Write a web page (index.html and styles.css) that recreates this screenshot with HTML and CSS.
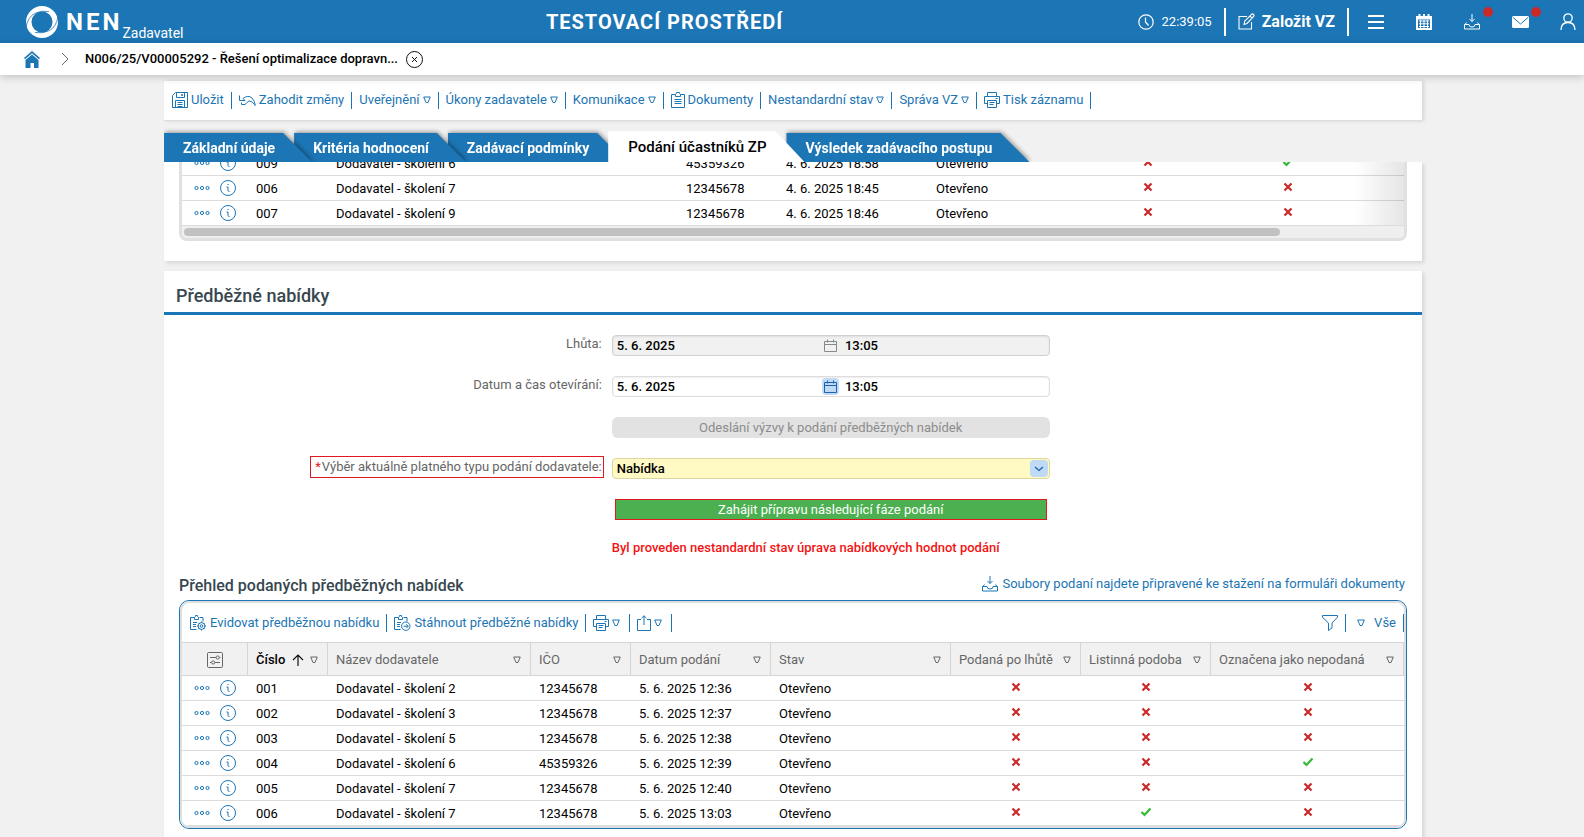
FILE: index.html
```html
<!DOCTYPE html>
<html lang="cs">
<head>
<meta charset="utf-8">
<title>NEN – Podání účastníků ZP</title>
<link rel="stylesheet" href="styles.css">
</head>
<body>
<svg class="sprite" aria-hidden="true">
  <symbol id="tri" viewBox="0 0 8 8"><path d="M.7 1h6.6L5 6.500H3z" fill="none" stroke="currentColor"/></symbol>
  <symbol id="x" viewBox="0 0 10 10"><path d="M1.500 1.500l7 7M8.500 1.500l-7 7" stroke="currentColor" stroke-width="2.200" fill="none"/></symbol>
  <symbol id="check" viewBox="0 0 12 10"><path d="M1.500 5l3 3 6-6.500" stroke="currentColor" stroke-width="2.200" fill="none"/></symbol>
  <symbol id="dots" viewBox="0 0 16 6"><g fill="none" stroke="currentColor"><circle cx="2.500" cy="3" r="1.600"/><circle cx="8" cy="3" r="1.600"/><circle cx="13.500" cy="3" r="1.600"/></g></symbol>
  <symbol id="info" viewBox="0 0 16 16"><g fill="none" stroke="currentColor"><circle cx="8" cy="8" r="7.500"/><path d="M6.500 7h1.500v3.500q0 1 1.500 1M7.500 4.500h1.200"/></g></symbol>
  <symbol id="save" viewBox="0 0 16 16"><g fill="none" stroke="currentColor"><path d="M3.500.5h12v15H.5v-12zM4.500.500v5h8v-5M9.500 2.500h1v1h-1zM3.500 15.500v-7h9v7M5.500 10.500h5M5.500 12.500h5M5.500 14.500h5"/></g></symbol>
  <symbol id="undo" viewBox="0 0 17 12"><path d="M.5 1.500v5H6L4 4.500Q9 .5 13 4q3 3 3.300 7.500-2.800-4.500-6.300-4.700L6 10.500H2.500V8.500" fill="none" stroke="currentColor"/></symbol>
  <symbol id="clip" viewBox="0 0 14 16"><g fill="none" stroke="currentColor"><path d="M4.500 2.500h-4v13h13v-13h-4M4.500 4.500v-2q1-.5 1-2h3q0 1.500 1 2v2zM3.500 7.500h7M3.500 9.500h7M3.500 11.500h7"/></g></symbol>
  <symbol id="print" viewBox="0 0 16 16"><g fill="none" stroke="currentColor"><path d="M3.500 4.500v-4h9v4M3.500 11.500h-3v-7h15v7h-3M3.500 8.500h9v7h-9zM5.500 10.500h5M5.500 12.500h4M11.500 6.500h2"/></g></symbol>
  <symbol id="clip-gear" viewBox="0 0 17 16"><g fill="none" stroke="currentColor"><path d="M4.500 2.500h-4v12h6M9.500 2.500h3.500v4M4.500 4.500v-2q1-.5 1-2h2q0 1.500 1 2v2zM3 7.500h4M3 9.500h3M3 11.500h3"/><circle cx="11.500" cy="11" r="3.400"/><circle cx="11.500" cy="11" r="1.300"/><path d="M11.500 6.500v1.500M11.500 14v1.500M7 11h1.500M14.500 11H16M8.400 7.900l1 1M14.600 14.100l-1-1M8.400 14.100l1-1M14.600 7.900l-1 1"/></g></symbol>
  <symbol id="clip-arrow" viewBox="0 0 17 16"><g fill="none" stroke="currentColor"><path d="M4.500 2.500h-4v12h6M9.500 2.500h3.500v4M4.500 4.500v-2q1-.5 1-2h2q0 1.500 1 2v2zM3 7.500h4M3 9.500h3M3 11.500h3"/><circle cx="11.800" cy="11.200" r="4.200"/><path d="M9.500 11.200h4.500M12.300 9.200l2 2-2 2"/></g></symbol>
  <symbol id="share" viewBox="0 0 14 16"><path d="M4 4.500H.5v11h13v-11H10M7 10V.8M4.500 3.200L7 .8l2.500 2.400" fill="none" stroke="currentColor"/></symbol>
  <symbol id="funnel" viewBox="0 0 16 16"><path d="M.5.500h15v1.800l-5.500 5.700v5L6.500 15.500V8L.5 2.300z" fill="none" stroke="currentColor"/></symbol>
  <symbol id="inbox" viewBox="0 0 16 16"><path d="M8 0v7.500M5.500 5L8 7.500 10.500 5M2.500 8.500L.5 11v4h15v-4l-2-2.500M.5 10.500H5q0 2.500 3 2.500t3-2.500h4.500" fill="none" stroke="currentColor"/></symbol>
  <symbol id="sliders" viewBox="0 0 16 16"><g fill="none" stroke="currentColor"><rect x=".5" y=".5" width="15" height="15" rx="1"/><path d="M3 5.500h6M12.500 5.500h1M3 10.500h1.500M8 10.500h5"/><circle cx="10.700" cy="5.500" r="1.600"/><circle cx="6.200" cy="10.500" r="1.600"/></g></symbol>
  <symbol id="cal" viewBox="0 0 13 13"><path d="M.5 2.500h12v10H.5zM.5 5.500h12M3.500.500v3M9.500.500v3" fill="none" stroke="currentColor"/></symbol>
</svg>

<header class="topbar">
  <a class="brand" href="#">
    <svg width="34" height="34" viewBox="0 0 34 34"><path fill="#fff" fill-rule="evenodd" d="M17 1a16 16 0 1 1 0 32a16 16 0 1 1 0-32zM17 6.500a10.500 10.500 0 1 0 0 21a10.500 10.500 0 1 0 0-21z"/><path d="M1 22Q3 12 9.500 8.500T24 6.500M33 12Q31 22 24.500 25.500T10 27.500" fill="none" stroke="#1c75b4" stroke-width=".8"/></svg>
    <span class="brand-name">NEN</span><span class="brand-role">Zadavatel</span>
  </a>
  <strong class="env">TESTOVACÍ PROSTŘEDÍ</strong>
  <nav class="tools">
    <span class="clock"><svg width="16" height="16" viewBox="0 0 16 16"><g fill="none" stroke="#fff" stroke-width="1.200"><circle cx="8" cy="8" r="7.200"/><path d="M7.500 3.500V8l3 3.500"/></g></svg>22:39:05</span>
    <a class="create" href="#"><svg width="17" height="17" viewBox="0 0 17 17"><path d="M9 3.500H1v12.500h12.500V9M6 11.500l.8-3.500L13.500 1.300q1-.8 2 .2t.2 2L9 10.500zM12 3l2.200 2.200" fill="none" stroke="#fff" stroke-width="1.100"/></svg>Založit VZ</a>
    <button class="tool" aria-label="Menu"><svg width="16" height="14" viewBox="0 0 16 14"><path d="M0 1h16M0 7h16M0 13h16" stroke="#fff" stroke-width="2"/></svg></button>
    <button class="tool" aria-label="Kalendář"><svg width="16" height="16" viewBox="0 0 16 16"><path fill="#fff" d="M0 2h2.500V0h2v2h2.500V0h2v2h2.500V0h2v2H16v14H0z"/><path d="M2 5.500h12v8.500H2z" fill="#1c75b4"/><path d="M3 7h10M3 9.800h10M3 12.500h10M4.500 6v8M8 6v8M11.500 6v8" stroke="#fff"/></svg></button>
    <button class="tool" aria-label="Stažené soubory"><svg width="16" height="16"><use href="#inbox"/></svg><i class="badge"></i></button>
    <button class="tool" aria-label="Zprávy"><svg width="17" height="12" viewBox="0 0 17 12"><rect width="17" height="12" rx="1.500" fill="#fff"/><path d="M1 1.500l7.500 6.500L16 1.500" fill="none" stroke="#1c75b4"/></svg><i class="badge"></i></button>
    <button class="tool" aria-label="Uživatel"><svg width="16" height="17" viewBox="0 0 16 17"><g fill="none" stroke="#fff" stroke-width="1.300"><circle cx="8" cy="5" r="4.200"/><path d="M1 17q0-7.500 7-7.500t7 7.500"/></g></svg></button>
  </nav>
</header>

<nav class="crumbs">
  <a href="#" aria-label="Domů"><svg width="16" height="17" viewBox="0 0 16 17"><path d="M0 7L8 0l8 7-1 1.200L8 2.300 1 8.200z" fill="#1c75b4"/><path d="M1.500 9L8 3.600 14.500 9v8H10v-5H6.500v5h-5z" fill="#1c75b4"/></svg></a>
  <svg class="chev" width="8" height="14" viewBox="0 0 8 14"><path d="M1 1l6 6-6 6" fill="none" stroke="#666"/></svg>
  <a class="crumb" href="#">N006/25/V00005292 - Řešení optimalizace dopravn...</a>
  <button class="close" aria-label="Zavřít"><svg width="17" height="17" viewBox="0 0 17 17"><g fill="none" stroke="#111"><circle cx="8.500" cy="8.500" r="8"/><path d="M6 6l5 5M11 6l-5 5"/></g></svg></button>
</nav>

<main class="page">
  <div class="actions">
    <button class="act"><svg width="16" height="16"><use href="#save"/></svg>Uložit</button>
    <button class="act"><svg width="17" height="12"><use href="#undo"/></svg>Zahodit změny</button>
    <button class="act">Uveřejnění<svg width="8" height="8"><use href="#tri"/></svg></button>
    <button class="act">Úkony zadavatele<svg width="8" height="8"><use href="#tri"/></svg></button>
    <button class="act">Komunikace<svg width="8" height="8"><use href="#tri"/></svg></button>
    <button class="act"><svg width="14" height="16"><use href="#clip"/></svg>Dokumenty</button>
    <button class="act">Nestandardní stav<svg width="8" height="8"><use href="#tri"/></svg></button>
    <button class="act">Správa VZ<svg width="8" height="8"><use href="#tri"/></svg></button>
    <button class="act"><svg width="16" height="16"><use href="#print"/></svg>Tisk záznamu</button>
  </div>

  <nav class="tabs">
    <a class="tab first" href="#"><span>Základní údaje</span></a>
    <a class="tab second" href="#"><span>Kritéria hodnocení</span></a>
    <a class="tab" href="#"><span>Zadávací podmínky</span></a>
    <a class="tab active" href="#" aria-current="page"><span>Podání účastníků ZP</span></a>
    <a class="tab" href="#"><span>Výsledek zadávacího postupu</span></a>
  </nav>

  <section class="panel upper">
    <div class="scrolled">
      <table class="grid wide">
        <colgroup><col class="c-act"><col class="c-no"><col class="c-long"><col class="c-ico"><col class="c-when"><col class="c-state"><col class="c-flag"><col class="c-flag"><col></colgroup>
        <tbody>
          <tr><td class="ops"><div class="rowact"><button aria-label="Akce"><svg width="16" height="6"><use href="#dots"/></svg></button><button aria-label="Detail"><svg width="16" height="16"><use href="#info"/></svg></button></div></td><td>009</td><td>Dodavatel - školení 6</td><td>45359326</td><td>4. 6. 2025 18:58</td><td>Otevřeno</td><td class="flag"><svg class="no" width="10" height="10"><use href="#x"/></svg></td><td class="flag"><svg class="yes" width="12" height="10"><use href="#check"/></svg></td><td></td></tr>
          <tr><td class="ops"><div class="rowact"><button aria-label="Akce"><svg width="16" height="6"><use href="#dots"/></svg></button><button aria-label="Detail"><svg width="16" height="16"><use href="#info"/></svg></button></div></td><td>006</td><td>Dodavatel - školení 7</td><td>12345678</td><td>4. 6. 2025 18:45</td><td>Otevřeno</td><td class="flag"><svg class="no" width="10" height="10"><use href="#x"/></svg></td><td class="flag"><svg class="no" width="10" height="10"><use href="#x"/></svg></td><td></td></tr>
          <tr><td class="ops"><div class="rowact"><button aria-label="Akce"><svg width="16" height="6"><use href="#dots"/></svg></button><button aria-label="Detail"><svg width="16" height="16"><use href="#info"/></svg></button></div></td><td>007</td><td>Dodavatel - školení 9</td><td>12345678</td><td>4. 6. 2025 18:46</td><td>Otevřeno</td><td class="flag"><svg class="no" width="10" height="10"><use href="#x"/></svg></td><td class="flag"><svg class="no" width="10" height="10"><use href="#x"/></svg></td><td></td></tr>
        </tbody>
      </table>
      <div class="track"><div class="thumb"></div></div>
    </div>
  </section>

  <section class="panel lower">
    <h2 class="title">Předběžné nabídky</h2>
    <form class="form">
      <label class="lab" for="d1">Lhůta:</label>
      <div class="field off"><input id="d1" class="date" value="5. 6. 2025" readonly><svg class="calicon" width="13" height="13"><use href="#cal"/></svg><input class="time" value="13:05" aria-label="Lhůta – čas" readonly></div>
      <label class="lab" for="d2">Datum a čas otevírání:</label>
      <div class="field"><input id="d2" class="date" value="5. 6. 2025"><button type="button" class="calbtn" aria-label="Vybrat datum"><svg width="13" height="13"><use href="#cal"/></svg></button><input class="time" value="13:05" aria-label="Čas otevírání"></div>
      <button type="button" class="send" disabled>Odeslání výzvy k podání předběžných nabídek</button>
      <label class="lab" for="typ"><span class="marked"><span class="req">*</span>Výběr aktuálně platného typu podání dodavatele:</span></label>
      <div class="pick"><select id="typ"><option>Nabídka</option></select><span class="drop"><svg width="10" height="6" viewBox="0 0 10 6"><path d="M1 1l4 3.500L9 1" fill="none" stroke="#1a62b0" stroke-width="1.300"/></svg></span></div>
      <button type="button" class="go">Zahájit přípravu následující fáze podání</button>
      <p class="warn">Byl proveden nestandardní stav úprava nabídkových hodnot podání</p>
    </form>

    <div class="listhead">
      <h3>Přehled podaných předběžných nabídek</h3>
      <a href="#"><svg width="16" height="16"><use href="#inbox"/></svg>Soubory podaní najdete připravené ke stažení na formuláři dokumenty</a>
    </div>

    <div class="box">
      <div class="boxin">
        <div class="bar">
          <button class="act"><svg width="17" height="16"><use href="#clip-gear"/></svg>Evidovat předběžnou nabídku</button>
          <button class="act"><svg width="17" height="16"><use href="#clip-arrow"/></svg>Stáhnout předběžné nabídky</button>
          <button class="act more" aria-label="Tisk"><svg width="16" height="16"><use href="#print"/></svg><svg width="8" height="8"><use href="#tri"/></svg></button>
          <button class="act more" aria-label="Export"><svg width="14" height="16"><use href="#share"/></svg><svg width="8" height="8"><use href="#tri"/></svg></button>
          <button class="act filter" aria-label="Filtr"><svg width="16" height="16"><use href="#funnel"/></svg></button>
          <button class="act all"><svg width="8" height="8"><use href="#tri"/></svg>Vše</button>
        </div>
        <table class="grid">
          <colgroup><col class="c-act"><col class="c-no"><col class="c-name"><col class="c-ico"><col class="c-date"><col class="c-stav"><col class="c-bool"><col class="c-bool"><col></colgroup>
          <thead><tr>
            <th class="cfg"><button aria-label="Nastavení sloupců"><svg width="16" height="16"><use href="#sliders"/></svg></button></th>
            <th class="sorted"><div class="hd"><span>Číslo</span><svg class="up" width="12" height="12" viewBox="0 0 12 12"><path d="M6 12V1M1 6l5-5 5 5" fill="none" stroke="#111" stroke-width="1.200"/></svg><svg class="mark" width="8" height="8"><use href="#tri"/></svg></div></th>
            <th><div class="hd"><span>Název dodavatele</span><svg width="8" height="8"><use href="#tri"/></svg></div></th>
            <th><div class="hd"><span>IČO</span><svg width="8" height="8"><use href="#tri"/></svg></div></th>
            <th><div class="hd"><span>Datum podání</span><svg width="8" height="8"><use href="#tri"/></svg></div></th>
            <th><div class="hd"><span>Stav</span><svg width="8" height="8"><use href="#tri"/></svg></div></th>
            <th><div class="hd"><span>Podaná po lhůtě</span><svg width="8" height="8"><use href="#tri"/></svg></div></th>
            <th><div class="hd"><span>Listinná podoba</span><svg width="8" height="8"><use href="#tri"/></svg></div></th>
            <th><div class="hd"><span>Označena jako nepodaná</span><svg width="8" height="8"><use href="#tri"/></svg></div></th>
          </tr></thead>
          <tbody id="rows"></tbody>
        </table>
      </div>
    </div>
  </section>
</main>
<script src="rows.js"></script>
</body>
</html>
```
FILE: styles.css
```css
* { box-sizing: border-box; }
html, body { height: 100%; }
body { margin: 0; background: #f1f1f1; font: 13px/16px Roboto, sans-serif; color: #000; overflow: hidden; }
button, input, select { font: inherit; color: inherit; border: 0; padding: 0; margin: 0; background: none; }
button { display: inline-flex; align-items: center; cursor: pointer; }
a { color: inherit; text-decoration: none; }
svg { flex: none; display: block; }
.sprite { display: none; }

.topbar { display: flex; justify-content: space-between; align-items: center; height: 43px; padding: 0 8px 0 25px; background: #1c75b4; color: #fff; }
.brand { display: flex; align-items: center; }
.brand-name { margin-left: 7px; font-size: 24px; line-height: 28px; font-weight: 700; letter-spacing: 3px; }
.brand-role { align-self: flex-end; padding-top: 22px; font-size: 14px; line-height: 14px; }
.env { padding-left: 8px; font-size: 20px; line-height: 24px; font-weight: 700; letter-spacing: 1px; }
.tools { display: flex; align-items: center; justify-content: flex-end; }
.clock { display: flex; align-items: center; gap: 8px; height: 28px; padding-right: 12px; border-right: 2px solid #fff; }
.create { display: flex; align-items: center; gap: 7px; height: 28px; padding: 0 12px; border-right: 2px solid #fff; font-size: 16px; font-weight: 700; }
.tool { position: relative; width: 48px; height: 28px; justify-content: center; }
.tool:first-of-type { margin-left: 3px; }
.tool:last-child { justify-content: flex-end; width: 32px; }
.badge { position: absolute; top: -1px; right: 3px; width: 10px; height: 10px; border-radius: 50%; background: #c92a2a; }

.crumbs { position: relative; z-index: 2; display: flex; align-items: center; height: 32px; padding: 0 24px; background: #fff; box-shadow: 0 2px 8px rgba(0,0,0,.2); }
.chev { margin: 0 16px 0 21px; }
.crumb { font-weight: 500; }
.close { margin-left: 8px; }

.page { padding: 6px 162px 0 164px; }
.actions { display: flex; align-items: center; height: 40px; padding: 0 1px 1px; background: #fff; border-bottom: 1px solid #ddd; box-shadow: 2px 0 4px rgba(0,0,0,.12); }
.act { gap: 3px; height: 17px; padding: 0 7px; border-right: 1px solid #1c75b4; color: #1c75b4; white-space: nowrap; }

.tabs { position: relative; display: flex; align-items: flex-end; height: 41px; overflow: hidden; }
.tab { position: relative; margin-right: -18px; filter: drop-shadow(1px -1px 2px rgba(0,0,0,.4)); }
.tab span { display: block; height: 29px; padding: 6px 37px 0 19px; background: #1c75b4; color: #fff; font-size: 14px; line-height: 18px; font-weight: 700; white-space: nowrap; clip-path: polygon(0 0, calc(100% - 29px) 0, 100% 100%, 0 100%); }
.tab.first { z-index: 2; }
.tab.second { z-index: 1; }
.tab.active { z-index: 3; filter: none; }
.tab.active span { height: 31px; padding: 7px 38px 0 20px; background: #fff; color: #000; font-size: 15px; font-weight: 500; }

.panel { background: #fff; box-shadow: 2px 2px 4px rgba(0,0,0,.12); }
.upper { padding: 0 15px 20px; margin-bottom: 10px; clip-path: inset(0 -8px -8px -8px); }
.lower { padding-bottom: 30px; }
.scrolled { position: relative; display: flex; flex-direction: column; justify-content: flex-end; height: 79px; overflow: hidden; border: 3px solid #dee0e2; border-top: 0; border-radius: 0 0 8px 8px; }
.scrolled::after { content: ""; position: absolute; right: 0; top: 0; bottom: 13px; width: 50px; background: linear-gradient(to right, transparent, rgba(0,0,0,.1)); }
.track { flex: none; height: 12px; padding: 2px; background: #efefef; }
.thumb { width: 90%; height: 8px; border-radius: 4px; background: #c1c1c1; }

.grid { width: 100%; table-layout: fixed; border-collapse: separate; border-spacing: 0; }
.c-act { width: 66px; } .c-no { width: 80px; } .c-name { width: 203px; } .c-ico { width: 100px; }
.c-date { width: 140px; } .c-stav { width: 180px; } .c-bool { width: 130px; }
.c-long { width: 350px; } .c-when { width: 150px; } .c-state { width: 150px; } .c-flag { width: 140px; }
.grid td { height: 25px; padding: 2px 8px 0; border-bottom: 1px solid #dcdcdc; white-space: nowrap; }
.grid .flag { padding: 0 8px 2px; }
.grid .ops { padding-top: 0; }
.flag svg { margin: 0 auto; }
.no { color: #c92a2a; }
.yes { color: #35b935; }
.rowact { display: flex; align-items: center; gap: 10px; padding-left: 4px; color: #1c75b4; }
.grid th { height: 34px; padding: 1px 9px 0 8px; background: #f1f1f1; border: solid #d5d5d5; border-width: 1px 1px 1px 0; font-weight: 400; color: #666; text-align: left; }
.hd { display: flex; align-items: center; justify-content: space-between; }
.grid .sorted { color: #000; font-weight: 500; }
.mark { color: #666; }
.cfg button { margin-left: 17px; vertical-align: middle; }

.title { margin: 0; padding: 14px 12px 5px; border-bottom: 3px solid #1c75b4; font-size: 18px; line-height: 22px; font-weight: 500; color: #37474f; }
.form { display: grid; grid-template-columns: 34.8% 34.8%; column-gap: 10px; row-gap: 20px; padding-top: 20px; }
.lab { text-align: right; color: #666; line-height: 17px; }
.marked { display: inline-block; padding: 1px 1px 2px 4px; border: 1px solid #e0191f; margin: -4px -2px -4px 0; }
.req { margin-right: 1px; color: #d22; }
.field { display: flex; align-items: center; height: 21px; border: 1px solid #ddd; border-radius: 4px; font-weight: 500; box-shadow: inset 0 1px 2px rgba(0,0,0,.08); }
.off { background: #f1f1f1; border-color: #d0d0d0; }
.field input { min-width: 0; height: 19px; padding: 0 4px; }
.date { flex: 0 0 48%; }
.field .time { flex: 1; padding-left: 6px; }
.calicon { margin: 0 2px; color: #888; }
.calbtn { padding: 2px; border-radius: 4px; background: #c0d9f5; color: #1a62b0; }
.send, .go, .warn { grid-column: 2; }
.send { height: 21px; justify-content: center; border-radius: 6px; background: #e2e2e2; color: #8c8c8c; }
.pick { position: relative; }
.pick select { display: block; width: 100%; height: 21px; padding: 0 4px; appearance: none; border: 1px solid #ddd6a0; border-radius: 4px; background: #fff9c4; font-weight: 500; }
.drop { position: absolute; right: 2px; top: 2px; display: grid; place-items: center; width: 18px; height: 17px; border-radius: 4px; background: #c0d9f5; pointer-events: none; }
.go { height: 21px; margin: 0 3px; justify-content: center; border: 1px solid #e0191f; background: #4caf50; color: #fff; }
.warn { margin: 0; font-weight: 500; color: #f31313; }

.listhead { display: flex; justify-content: space-between; align-items: flex-start; padding: 20px 17px 4px 15px; }
.listhead h3 { margin: 0; font-size: 16px; line-height: 20px; font-weight: 500; color: #37474f; }
.listhead a { display: flex; gap: 4px; color: #1c75b4; }
.box { margin: 0 15px; border: 1px solid #1c75b4; border-radius: 10px; overflow: hidden; }
.boxin { border: 2px solid #dfdfdf; border-radius: 9px; overflow: hidden; }
.bar { display: flex; align-items: center; height: 39px; padding-left: 1px; }
.bar .act { height: 18px; }
.bar .more { padding-right: 9px; }
.bar .filter { margin-left: auto; }
.bar .all { gap: 9px; padding-left: 11px; }
```
FILE: rows.js
```js
const data = [
  ["001", "Dodavatel - školení 2", "12345678", "5. 6. 2025 12:36", 0, 0, 0],
  ["002", "Dodavatel - školení 3", "12345678", "5. 6. 2025 12:37", 0, 0, 0],
  ["003", "Dodavatel - školení 5", "12345678", "5. 6. 2025 12:38", 0, 0, 0],
  ["004", "Dodavatel - školení 6", "45359326", "5. 6. 2025 12:39", 0, 0, 1],
  ["005", "Dodavatel - školení 7", "12345678", "5. 6. 2025 12:40", 0, 0, 0],
  ["006", "Dodavatel - školení 7", "12345678", "5. 6. 2025 13:03", 0, 1, 0]
];
const flag = v => v
  ? '<td class="flag"><svg class="yes" width="12" height="10"><use href="#check"/></svg></td>'
  : '<td class="flag"><svg class="no" width="10" height="10"><use href="#x"/></svg></td>';
const act = '<td class="ops"><div class="rowact"><button aria-label="Akce"><svg width="16" height="6"><use href="#dots"/></svg></button><button aria-label="Detail"><svg width="16" height="16"><use href="#info"/></svg></button></div></td>';
document.getElementById("rows").innerHTML = data.map(r =>
  "<tr>" + act + r.slice(0, 4).map(t => `<td>${t}</td>`).join("") + "<td>Otevřeno</td>" + r.slice(4).map(flag).join("") + "</tr>"
).join("");
```
